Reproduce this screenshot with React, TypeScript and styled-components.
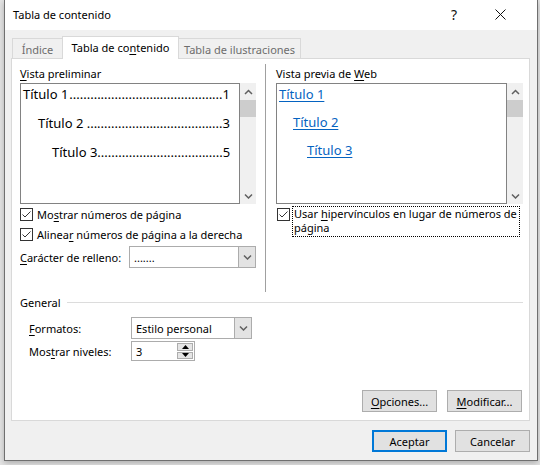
import styled, { createGlobalStyle } from "styled-components";

const GlobalStyle = createGlobalStyle`
  html, body {
    margin: 0;
    padding: 0;
    background: #e4e4e4;
  }
  body {
    font-family: "Noto Sans", "Liberation Sans", sans-serif;
    font-size: 11px;
    color: #000;
  }
`;

const Page = styled.div`
  width: 540px;
  height: 465px;
  padding-left: 4px;
  box-sizing: border-box;
`;

const Dialog = styled.div`
  width: 534px;
  height: 461px;
  box-sizing: border-box;
  border: 1px solid #6f6f6f;
  border-top: none;
  background: #f0f0f0;
  display: flex;
  flex-direction: column;
  box-shadow: 0 2px 6px rgba(0, 0, 0, 0.25);
`;

const TitleBar = styled.div`
  height: 30px;
  flex: none;
  background: #fff;
  display: flex;
  align-items: center;
  padding-left: 8px;
  padding-bottom: 2px;
  box-sizing: border-box;
`;

const TitleText = styled.span`
  font-size: 11px;
  flex: 1;
`;

const TitleButton = styled.span<{ $w: number }>`
  width: ${(p) => p.$w}px;
  display: flex;
  justify-content: center;
  align-items: center;
  font-size: 14px;
  color: #111;
`;

const Body = styled.div`
  flex: 1;
  display: flex;
  flex-direction: column;
  padding: 6px 7px 0 6px;
`;

const TabRow = styled.div`
  height: 23px;
  display: flex;
  align-items: flex-end;
  padding-left: 1px;
`;

const Tab = styled.div<{ $w: number; $active?: boolean }>`
  width: ${(p) => p.$w}px;
  height: ${(p) => (p.$active ? 23 : 21)}px;
  margin-right: -1px;
  box-sizing: border-box;
  border: 1px solid #d9d9d9;
  border-bottom: none;
  background: ${(p) => (p.$active ? "#fff" : "#f0f0f0")};
  color: ${(p) => (p.$active ? "#000" : "#6d6d6d")};
  display: flex;
  justify-content: center;
  align-items: center;
  white-space: nowrap;
  padding-bottom: ${(p) => (p.$active ? 2 : 0)}px;
  position: relative;
  z-index: ${(p) => (p.$active ? 2 : 0)};
`;

const Panel = styled.div`
  height: 363px;
  margin-top: -1px;
  box-sizing: border-box;
  border: 1px solid #d9d9d9;
  background: #fff;
  position: relative;
  z-index: 1;
  display: flex;
  flex-direction: column;
  padding: 7px 5px 8px 8px;
`;

const TopSection = styled.div`
  display: flex;
  height: 226px;
`;

const Column = styled.div<{ $w: number }>`
  width: ${(p) => p.$w}px;
  display: flex;
  flex-direction: column;
`;

const Divider = styled.div`
  width: 1px;
  background: #a0a0a0;
  margin: -2px 10px 0 9px;
`;

const Label = styled.div`
  height: 16px;
  line-height: 16px;
  margin-bottom: 1px;
  white-space: nowrap;
`;

const Preview = styled.div`
  display: flex;
  height: 121px;
`;

const PreviewBox = styled.div<{ $w: number }>`
  width: ${(p) => p.$w}px;
  box-sizing: border-box;
  border: 1px solid #828282;
  padding: 0 9px 0 2px;
  font-size: 13px;
  overflow: hidden;
`;

const TocEntry = styled.div<{ $indent: number }>`
  display: flex;
  height: 20px;
  line-height: 20px;
  margin-bottom: 9px;
  padding-left: ${(p) => p.$indent}px;
  white-space: nowrap;
`;

const Leader = styled.span`
  flex: 1;
  text-align: right;
  white-space: nowrap;
`;

const WebEntry = styled.div<{ $indent: number }>`
  height: 20px;
  line-height: 20px;
  margin-bottom: 8px;
  padding-left: ${(p) => p.$indent}px;
`;

const Link = styled.span`
  color: #0563c1;
  text-decoration: underline;
  text-underline-offset: 2px;
`;

const Scrollbar = styled.div`
  width: 16px;
  background: #f0f0f0;
  display: flex;
  flex-direction: column;
  align-items: center;
`;

const ScrollArrow = styled.div`
  height: 17px;
  width: 16px;
  display: flex;
  align-items: center;
  justify-content: center;
`;

const Thumb = styled.div`
  width: 16px;
  height: 17px;
  background: #cdcdcd;
`;

const ScrollSpacer = styled.div`
  flex: 1;
`;

const CheckRow = styled.div`
  height: 20px;
  display: flex;
  align-items: center;
  white-space: nowrap;
`;

const Box = styled.span`
  width: 13px;
  height: 13px;
  flex: none;
  box-sizing: border-box;
  border: 1px solid #333;
  background: #fff;
  display: inline-flex;
  align-items: center;
  justify-content: center;
  margin-right: 4px;
`;

const HyperRow = styled.div`
  display: flex;
  align-items: flex-start;
  margin-top: 2px;
`;

const HyperBox = styled.span`
  display: flex;
  margin: 2px 0 0 1px;
`;

const FocusLabel = styled.span`
  width: 228px;
  box-sizing: border-box;
  border: 1px dotted #000;
  line-height: 14px;
  padding: 0 1px 1px;
  margin-left: -2px;
  white-space: nowrap;
`;

const FieldRow = styled.div<{ $h: number; $mt: number; $indent?: number }>`
  display: flex;
  align-items: center;
  height: ${(p) => p.$h}px;
  margin-top: ${(p) => p.$mt}px;
  padding-left: ${(p) => p.$indent || 0}px;
  white-space: nowrap;
`;

const FieldLabel = styled.span<{ $w: number }>`
  width: ${(p) => p.$w}px;
  flex: none;
`;

const Select = styled.div<{ $w: number; $h: number }>`
  width: ${(p) => p.$w}px;
  height: ${(p) => p.$h}px;
  box-sizing: border-box;
  border: 1px solid #acacac;
  background: #fff;
  display: flex;
`;

const SelectValue = styled.span`
  flex: 1;
  padding-left: 4px;
  display: flex;
  align-items: center;
`;

const SelectArrow = styled.span`
  width: 16px;
  background: #e3e3e3;
  border-left: 1px solid #acacac;
  display: flex;
  align-items: center;
  justify-content: center;
`;

const SpinButtons = styled.span`
  width: 16px;
  display: flex;
  flex-direction: column;
  padding: 1px 1px 1px 0;
  gap: 1px;
`;

const SpinButton = styled.span`
  flex: 1;
  background: #e5e5e5;
  border: 1px solid #adadad;
  display: flex;
  align-items: center;
  justify-content: center;
`;

const GeneralRow = styled.div`
  height: 16px;
  margin-top: 2px;
  display: flex;
  align-items: center;
  width: 503px;
`;

const Rule = styled.div`
  flex: 1;
  height: 1px;
  background: #dcdcdc;
  margin-left: 6px;
`;

const ButtonRow = styled.div<{ $gap: number }>`
  display: flex;
  justify-content: flex-end;
  gap: ${(p) => p.$gap}px;
`;

const PanelButtons = styled(ButtonRow)`
  margin-top: auto;
  margin-right: 2px;
`;

const Footer = styled(ButtonRow)`
  padding-top: 9px;
`;

const Button = styled.button<{ $default?: boolean }>`
  width: 75px;
  height: 22px;
  box-sizing: border-box;
  font-family: inherit;
  font-size: 11px;
  color: #000;
  background: #e1e1e1;
  border: ${(p) => (p.$default ? "2px solid #0078d7" : "1px solid #adadad")};
  padding: 0;
  display: flex;
  align-items: center;
  justify-content: center;
`;

const Key = styled.u`
  text-underline-offset: 2px;
`;

function Chevron({ down }: { down?: boolean }) {
  return (
    <svg width="9" height="6" viewBox="0 0 9 6">
      <polyline
        points={down ? "1,1.5 4.5,5 8,1.5" : "1,5 4.5,1.5 8,5"}
        fill="none"
        stroke="#606060"
        strokeWidth="1.5"
      />
    </svg>
  );
}

function Triangle({ down }: { down?: boolean }) {
  return (
    <svg width="7" height="4" viewBox="0 0 7 4">
      <polygon points={down ? "0,0 7,0 3.5,4" : "0,4 7,4 3.5,0"} fill="#000" />
    </svg>
  );
}

function Check() {
  return (
    <Box>
      <svg width="11" height="11" viewBox="0 0 11 11">
        <polyline points="1.5,5.5 4,8 9.5,2.5" fill="none" stroke="#333" strokeWidth="1" />
      </svg>
    </Box>
  );
}

function ScrollBar() {
  return (
    <Scrollbar>
      <ScrollArrow>
        <Chevron />
      </ScrollArrow>
      <Thumb />
      <ScrollSpacer />
      <ScrollArrow>
        <Chevron down />
      </ScrollArrow>
    </Scrollbar>
  );
}

const tocEntries = [
  { title: "Título 1", page: "1", indent: 0, dots: 44 },
  { title: "Título 2", page: "3", indent: 15, dots: 39 },
  { title: "Título 3", page: "5", indent: 29, dots: 36 },
];

export default function App() {
  return (
    <Page>
      <GlobalStyle />
      <Dialog>
        <TitleBar>
          <TitleText>Tabla de contenido</TitleText>
          <TitleButton $w={46}>?</TitleButton>
          <TitleButton $w={46}>
            <svg width="11" height="11" viewBox="0 0 11 11">
              <path d="M0.5 0.5 L10.5 10.5 M10.5 0.5 L0.5 10.5" stroke="#111" strokeWidth="1" />
            </svg>
          </TitleButton>
          <TitleButton $w={14} />
        </TitleBar>
        <Body>
          <TabRow>
            <Tab $w={51}>Índice</Tab>
            <Tab $w={117} $active>
              <span>
                Tabla de co<Key>n</Key>tenido
              </span>
            </Tab>
            <Tab $w={123}>Tabla de ilustraciones</Tab>
          </TabRow>
          <Panel>
            <TopSection>
              <Column $w={236}>
                <Label>
                  <Key>V</Key>ista preliminar
                </Label>
                <Preview>
                  <PreviewBox $w={220}>
                    {tocEntries.map((e) => (
                      <TocEntry key={e.page} $indent={e.indent}>
                        <span>{e.title}</span>
                        <Leader>{".".repeat(e.dots)}</Leader>
                        <span>{e.page}</span>
                      </TocEntry>
                    ))}
                  </PreviewBox>
                  <ScrollBar />
                </Preview>
                <CheckRow>
                  <Check />
                  <span>
                    Mo<Key>s</Key>trar números de página
                  </span>
                </CheckRow>
                <CheckRow>
                  <Check />
                  <span>
                    Alinea<Key>r</Key> números de página a la derecha
                  </span>
                </CheckRow>
                <FieldRow $h={22} $mt={2}>
                  <FieldLabel $w={109}>
                    <Key>C</Key>arácter de relleno:
                  </FieldLabel>
                  <Select $w={127} $h={22}>
                    <SelectValue>.......</SelectValue>
                    <SelectArrow>
                      <Chevron down />
                    </SelectArrow>
                  </Select>
                </FieldRow>
              </Column>
              <Divider />
              <Column $w={247}>
                <Label>
                  Vista previa de <Key>W</Key>eb
                </Label>
                <Preview>
                  <PreviewBox $w={231}>
                    <WebEntry $indent={0}>
                      <Link>Título 1</Link>
                    </WebEntry>
                    <WebEntry $indent={14}>
                      <Link>Título 2</Link>
                    </WebEntry>
                    <WebEntry $indent={28}>
                      <Link>Título 3</Link>
                    </WebEntry>
                  </PreviewBox>
                  <ScrollBar />
                </Preview>
                <HyperRow>
                  <HyperBox>
                    <Check />
                  </HyperBox>
                  <FocusLabel>
                    Usar <Key>h</Key>ipervínculos en lugar de números de
                    <br />
                    página
                  </FocusLabel>
                </HyperRow>
              </Column>
            </TopSection>
            <GeneralRow>
              <span>General</span>
              <Rule />
            </GeneralRow>
            <FieldRow $h={22} $mt={7} $indent={9}>
              <FieldLabel $w={102}>
                <Key>F</Key>ormatos:
              </FieldLabel>
              <Select $w={121} $h={22}>
                <SelectValue>Estilo personal</SelectValue>
                <SelectArrow>
                  <Chevron down />
                </SelectArrow>
              </Select>
            </FieldRow>
            <FieldRow $h={20} $mt={2} $indent={9}>
              <FieldLabel $w={102}>
                Mos<Key>t</Key>rar niveles:
              </FieldLabel>
              <Select $w={64} $h={20}>
                <SelectValue>3</SelectValue>
                <SpinButtons>
                  <SpinButton>
                    <Triangle />
                  </SpinButton>
                  <SpinButton>
                    <Triangle down />
                  </SpinButton>
                </SpinButtons>
              </Select>
            </FieldRow>
            <PanelButtons $gap={10}>
              <Button>
                <span>
                  <Key>O</Key>pciones...
                </span>
              </Button>
              <Button>
                <span>
                  <Key>M</Key>odificar...
                </span>
              </Button>
            </PanelButtons>
          </Panel>
          <Footer $gap={8}>
            <Button $default>Aceptar</Button>
            <Button>Cancelar</Button>
          </Footer>
        </Body>
      </Dialog>
    </Page>
  );
}
